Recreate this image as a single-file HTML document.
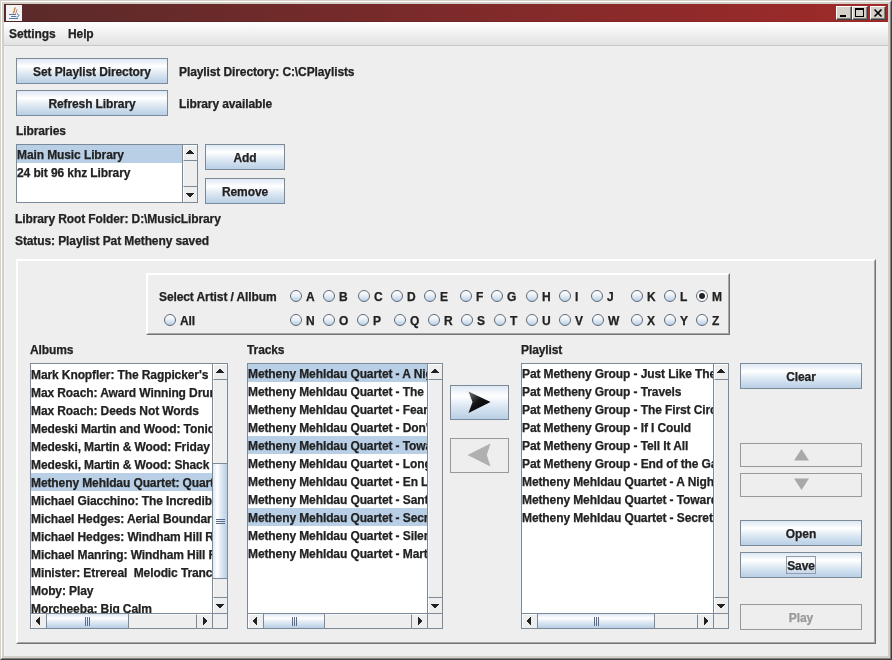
<!DOCTYPE html><html><head><meta charset="utf-8"><style>
*{margin:0;padding:0;box-sizing:border-box}
html,body{width:892px;height:660px;overflow:hidden;background:#d4d0c8}
body{position:relative;font-family:"Liberation Sans",sans-serif;font-weight:bold;font-size:12px;color:#222;letter-spacing:-0.1px;-webkit-text-stroke:0.25px #222}
div{position:absolute}
.t{white-space:nowrap;line-height:15px;padding-top:1px}
.btn{border:1px solid #7a8a99;background:linear-gradient(#dde8f3 0%,#fff 30%,#dde8f3 60%,#b8cfe5 100%);text-align:center;white-space:nowrap;padding-top:1px}
.dis{color:#999;-webkit-text-stroke:0.25px #999;border-color:#999;background:#eee}
.list{border:1px solid #7a8a99;background:#fff;overflow:hidden}
.row{left:0;height:18px;line-height:18px;padding-left:0;padding-top:1px;white-space:nowrap;width:100%}
.sel{background:#b8cfe5}
.rd{width:12px;height:12px;border-radius:50%;border:1px solid #5f6b78;background:linear-gradient(#fff 0%,#f2f6fa 30%,#dde8f3 60%,#b8cfe5 100%)}
.rt{white-space:nowrap;line-height:15px;padding-top:1px}
.wb{width:16px;height:14px;background:#d4d0c8;border-top:1px solid #fff;border-left:1px solid #fff;border-right:1px solid #404040;border-bottom:1px solid #404040}
.wbi{left:0;top:0;width:14px;height:12px;border-right:1px solid #808080;border-bottom:1px solid #808080}
</style></head><body><div style="left:0;top:0;width:892px;height:660px;will-change:transform;overflow:hidden">
<div style="left:0;top:0;width:892px;height:660px;border-top:1px solid #d4d0c8;border-left:1px solid #d4d0c8;border-right:1px solid #404040;border-bottom:1px solid #404040"></div>
<div style="left:1px;top:1px;width:890px;height:658px;border-top:1px solid #fff;border-left:1px solid #fff;border-right:1px solid #808080;border-bottom:1px solid #808080"></div>
<div style="left:4px;top:4px;width:884px;height:18px;background:linear-gradient(to right,#5a2a2a,#a02a2a)"></div>
<div style="left:6px;top:5px;width:16px;height:16px;background:#f2f2f4"></div>
<svg style="position:absolute;left:6px;top:5px" width="16" height="16" viewBox="0 0 16 16"><path d="M9.5 2.5 C7.5 4.5 9.5 6 7 8.5" stroke="#d88a40" stroke-width="1.4" fill="none"/><path d="M11 4.5 C10 6 11 7 9.5 8.5" stroke="#c06a30" stroke-width="1" fill="none"/><path d="M3 9.5 h7 M5 11.5 h5 M3 13.5 h9" stroke="#5577aa" stroke-width="1"/><path d="M11 9 C13.5 9 13.5 12 10.5 12" stroke="#4a6aa8" fill="none" stroke-width="1"/></svg>
<div class="wb" style="left:836px;top:6px"><div class="wbi"></div></div>
<div class="wb" style="left:852px;top:6px"><div class="wbi"></div></div>
<div class="wb" style="left:870px;top:6px"><div class="wbi"></div></div>
<div style="left:840px;top:15px;width:6px;height:2px;background:#000"></div>
<div style="left:855px;top:8px;width:9px;height:9px;border:1px solid #000;border-top-width:2px"></div>
<svg style="position:absolute;left:870px;top:6px" width="16" height="14"><path d="M4.5 3.5 L11.5 10.5 M11.5 3.5 L4.5 10.5" stroke="#000" stroke-width="1.6"/></svg>
<div style="left:4px;top:22px;width:884px;height:634px;background:#eeeeee"></div>
<div style="left:4px;top:46px;width:1px;height:610px;background:#f3f3f1"></div>
<div style="left:4px;top:22px;width:884px;height:24px;background:linear-gradient(#fff,#e2e2e2);border-bottom:1px solid #c8c8c8"></div>
<div style="left:4px;top:21px;width:884px;height:1px;background:linear-gradient(to right,#4a2222,#9a2828)"></div>
<div class="t" style="left:9px;top:26px">Settings</div>
<div class="t" style="left:68px;top:26px">Help</div>
<div class="btn" style="left:16px;top:58px;width:152px;height:26px;line-height:24px">Set Playlist Directory</div>
<div class="btn" style="left:16px;top:90px;width:152px;height:26px;line-height:24px">Refresh Library</div>
<div class="t" style="left:179px;top:64px">Playlist Directory: C:\CPlaylists</div>
<div class="t" style="left:179px;top:96px">Library available</div>
<div class="t" style="left:16px;top:123px">Libraries</div>
<div class="list" style="left:16px;top:144px;width:182px;height:59px"></div>
<div class="row sel" style="left:17px;top:145px;width:165px">Main Music Library</div>
<div class="row" style="left:17px;top:163px;width:165px">24 bit 96 khz Library</div>
<div style="left:182px;top:145px;width:15px;height:57px;background:#eeeeee;border-left:1px solid #7a8a99"></div>
<div style="left:183px;top:145px;width:1px;height:57px;background:#f8f9fc"></div>
<div style="left:183px;top:145px;width:14px;height:16px;background:#eeeeee;border-bottom:1px solid #7a8a99;border-top:1px solid #fff;border-left:1px solid #fff"></div>
<svg style="position:absolute;left:186px;top:150px" width="8" height="4" shape-rendering="crispEdges" fill="#222"><rect x="3" y="0" width="2" height="1"/><rect x="2" y="1" width="4" height="1"/><rect x="1" y="2" width="6" height="1"/><rect x="0" y="3" width="8" height="1"/></svg>
<div style="left:183px;top:186px;width:14px;height:16px;background:#eeeeee;border-top:1px solid #7a8a99;border-left:1px solid #fff"></div>
<svg style="position:absolute;left:186px;top:193px" width="8" height="4" shape-rendering="crispEdges" fill="#222"><rect x="0" y="0" width="8" height="1"/><rect x="1" y="1" width="6" height="1"/><rect x="2" y="2" width="4" height="1"/><rect x="3" y="3" width="2" height="1"/></svg>
<div class="btn" style="left:205px;top:144px;width:80px;height:26px;line-height:24px">Add</div>
<div class="btn" style="left:205px;top:178px;width:80px;height:26px;line-height:24px">Remove</div>
<div class="t" style="left:15px;top:211px">Library Root Folder: D:\MusicLibrary</div>
<div class="t" style="left:15px;top:233px">Status: Playlist Pat Metheny saved</div>
<div style="left:16px;top:259px;width:860px;height:385px;border-top:1px solid #fff;border-left:1px solid #fff;border-right:1px solid #747474;border-bottom:1px solid #747474"></div>
<div style="left:17px;top:260px;width:858px;height:383px;border-top:1px solid #fff;border-left:1px solid #fff;border-right:1px solid #a6a6a6;border-bottom:1px solid #a6a6a6"></div>
<div style="left:146px;top:273px;width:584px;height:62px;border-top:1px solid #fff;border-left:1px solid #fff;border-right:1px solid #747474;border-bottom:1px solid #747474"></div>
<div style="left:147px;top:274px;width:582px;height:60px;border-top:1px solid #fff;border-left:1px solid #fff;border-right:1px solid #a6a6a6;border-bottom:1px solid #a6a6a6"></div>
<div class="t" style="left:159px;top:289px">Select Artist / Allbum</div>
<div class="rd" style="left:290px;top:290px"></div>
<div class="rt" style="left:306px;top:289px">A</div>
<div class="rd" style="left:323px;top:290px"></div>
<div class="rt" style="left:339px;top:289px">B</div>
<div class="rd" style="left:358px;top:290px"></div>
<div class="rt" style="left:374px;top:289px">C</div>
<div class="rd" style="left:391px;top:290px"></div>
<div class="rt" style="left:407px;top:289px">D</div>
<div class="rd" style="left:424px;top:290px"></div>
<div class="rt" style="left:440px;top:289px">E</div>
<div class="rd" style="left:460px;top:290px"></div>
<div class="rt" style="left:476px;top:289px">F</div>
<div class="rd" style="left:491px;top:290px"></div>
<div class="rt" style="left:507px;top:289px">G</div>
<div class="rd" style="left:526px;top:290px"></div>
<div class="rt" style="left:542px;top:289px">H</div>
<div class="rd" style="left:559px;top:290px"></div>
<div class="rt" style="left:575px;top:289px">I</div>
<div class="rd" style="left:591px;top:290px"></div>
<div class="rt" style="left:607px;top:289px">J</div>
<div class="rd" style="left:631px;top:290px"></div>
<div class="rt" style="left:647px;top:289px">K</div>
<div class="rd" style="left:664px;top:290px"></div>
<div class="rt" style="left:680px;top:289px">L</div>
<div class="rd" style="left:696px;top:290px;background:#fbfcfe"></div>
<div style="left:699px;top:293px;width:6px;height:6px;border-radius:50%;background:#222"></div>
<div class="rt" style="left:712px;top:289px">M</div>
<div class="rd" style="left:290px;top:314px"></div>
<div class="rt" style="left:306px;top:313px">N</div>
<div class="rd" style="left:323px;top:314px"></div>
<div class="rt" style="left:339px;top:313px">O</div>
<div class="rd" style="left:357px;top:314px"></div>
<div class="rt" style="left:373px;top:313px">P</div>
<div class="rd" style="left:394px;top:314px"></div>
<div class="rt" style="left:410px;top:313px">Q</div>
<div class="rd" style="left:428px;top:314px"></div>
<div class="rt" style="left:444px;top:313px">R</div>
<div class="rd" style="left:461px;top:314px"></div>
<div class="rt" style="left:477px;top:313px">S</div>
<div class="rd" style="left:494px;top:314px"></div>
<div class="rt" style="left:510px;top:313px">T</div>
<div class="rd" style="left:526px;top:314px"></div>
<div class="rt" style="left:542px;top:313px">U</div>
<div class="rd" style="left:559px;top:314px"></div>
<div class="rt" style="left:575px;top:313px">V</div>
<div class="rd" style="left:592px;top:314px"></div>
<div class="rt" style="left:608px;top:313px">W</div>
<div class="rd" style="left:631px;top:314px"></div>
<div class="rt" style="left:647px;top:313px">X</div>
<div class="rd" style="left:664px;top:314px"></div>
<div class="rt" style="left:680px;top:313px">Y</div>
<div class="rd" style="left:696px;top:314px"></div>
<div class="rt" style="left:712px;top:313px">Z</div>
<div class="rd" style="left:164px;top:314px"></div>
<div class="rt" style="left:180px;top:313px">All</div>
<div class="t" style="left:30px;top:342px">Albums</div>
<div class="t" style="left:247px;top:342px">Tracks</div>
<div class="t" style="left:521px;top:342px">Playlist</div>
<div class="list" style="left:30px;top:363px;width:198px;height:266px"></div>
<div style="left:31px;top:364px;width:181px;height:249px;overflow:hidden">
<div class="row" style="top:1px">Mark Knopfler: The Ragpicker's Dream</div>
<div class="row" style="top:19px">Max Roach: Award Winning Drummer</div>
<div class="row" style="top:37px">Max Roach: Deeds Not Words</div>
<div class="row" style="top:55px">Medeski Martin and Wood: Tonic</div>
<div class="row" style="top:73px">Medeski, Martin &amp; Wood: Friday Afternoon</div>
<div class="row" style="top:91px">Medeski, Martin &amp; Wood: Shack Man</div>
<div class="row sel" style="top:109px">Metheny Mehldau Quartet: Quartet</div>
<div class="row" style="top:127px">Michael Giacchino: The Incredibles</div>
<div class="row" style="top:145px">Michael Hedges: Aerial Boundaries</div>
<div class="row" style="top:163px">Michael Hedges: Windham Hill Retrospective</div>
<div class="row" style="top:181px">Michael Manring: Windham Hill Retrospective</div>
<div class="row" style="top:199px">Minister: Etrereal&nbsp; Melodic Trance</div>
<div class="row" style="top:217px">Moby: Play</div>
<div class="row" style="top:235px">Morcheeba: Big Calm</div>
</div>
<div style="left:212px;top:364px;width:15px;height:249px;background:#eeeeee;border-left:1px solid #7a8a99"></div>
<div style="left:213px;top:364px;width:1px;height:249px;background:#f8f9fc"></div>
<div style="left:213px;top:364px;width:14px;height:16px;background:#eeeeee;border-bottom:1px solid #7a8a99;border-top:1px solid #fff;border-left:1px solid #fff"></div>
<svg style="position:absolute;left:216px;top:369px" width="8" height="4" shape-rendering="crispEdges" fill="#222"><rect x="3" y="0" width="2" height="1"/><rect x="2" y="1" width="4" height="1"/><rect x="1" y="2" width="6" height="1"/><rect x="0" y="3" width="8" height="1"/></svg>
<div style="left:213px;top:597px;width:14px;height:16px;background:#eeeeee;border-top:1px solid #7a8a99;border-left:1px solid #fff"></div>
<svg style="position:absolute;left:216px;top:604px" width="8" height="4" shape-rendering="crispEdges" fill="#222"><rect x="0" y="0" width="8" height="1"/><rect x="1" y="1" width="6" height="1"/><rect x="2" y="2" width="4" height="1"/><rect x="3" y="3" width="2" height="1"/></svg>
<div style="left:213px;top:463px;width:14px;height:116px;border-top:1px solid #7a8a99;border-bottom:1px solid #7a8a99;background:linear-gradient(to right,#dde8f3 0%,#fff 30%,#dde8f3 60%,#b8cfe5 100%)"></div>
<div style="left:216px;top:519px;width:9px;height:5px;border-top:1px solid #5a6b8c;border-bottom:1px solid #5a6b8c"></div>
<div style="left:216px;top:521px;width:9px;height:1px;background:#5a6b8c"></div>
<div style="left:31px;top:613px;width:181px;height:15px;background:#eeeeee;border-top:1px solid #7a8a99"></div>
<div style="left:31px;top:614px;width:181px;height:1px;background:#f8f9fc"></div>
<div style="left:31px;top:614px;width:16px;height:14px;background:#eeeeee;border-right:1px solid #7a8a99;border-top:1px solid #fff;border-left:1px solid #fff"></div>
<svg style="position:absolute;left:36px;top:617px" width="4" height="8" shape-rendering="crispEdges" fill="#222"><rect x="0" y="3" width="1" height="2"/><rect x="1" y="2" width="1" height="4"/><rect x="2" y="1" width="1" height="6"/><rect x="3" y="0" width="1" height="8"/></svg>
<div style="left:196px;top:614px;width:16px;height:14px;background:#eeeeee;border-left:1px solid #7a8a99;border-top:1px solid #fff"></div>
<svg style="position:absolute;left:203px;top:617px" width="4" height="8" shape-rendering="crispEdges" fill="#222"><rect x="0" y="0" width="1" height="8"/><rect x="1" y="1" width="1" height="6"/><rect x="2" y="2" width="1" height="4"/><rect x="3" y="3" width="1" height="2"/></svg>
<div style="left:46px;top:614px;width:83px;height:14px;border-left:1px solid #7a8a99;border-right:1px solid #7a8a99;background:linear-gradient(#dde8f3 0%,#fff 30%,#dde8f3 60%,#b8cfe5 100%)"></div>
<div style="left:85px;top:617px;width:5px;height:9px;border-left:1px solid #5a6b8c;border-right:1px solid #5a6b8c"></div>
<div style="left:87px;top:617px;width:1px;height:9px;background:#5a6b8c"></div>
<div style="left:212px;top:613px;width:15px;height:15px;background:#eeeeee;border-left:1px solid #7a8a99;border-top:1px solid #7a8a99"></div>
<div class="list" style="left:247px;top:363px;width:196px;height:266px"></div>
<div style="left:248px;top:364px;width:179px;height:249px;overflow:hidden">
<div class="row sel" style="top:0px">Metheny Mehldau Quartet - A Night Away</div>
<div class="row" style="top:18px">Metheny Mehldau Quartet - The Sound of Water</div>
<div class="row" style="top:36px">Metheny Mehldau Quartet - Fear and Trembling</div>
<div class="row" style="top:54px">Metheny Mehldau Quartet - Don't Wait</div>
<div class="row sel" style="top:72px">Metheny Mehldau Quartet - Towards the Light</div>
<div class="row" style="top:90px">Metheny Mehldau Quartet - Long Before</div>
<div class="row" style="top:108px">Metheny Mehldau Quartet - En La Tierra</div>
<div class="row" style="top:126px">Metheny Mehldau Quartet - Santa Cruz</div>
<div class="row sel" style="top:144px">Metheny Mehldau Quartet - Secret Beach</div>
<div class="row" style="top:162px">Metheny Mehldau Quartet - Silent Movie</div>
<div class="row" style="top:180px">Metheny Mehldau Quartet - Marta's Theme</div>
</div>
<div style="left:427px;top:364px;width:15px;height:249px;background:#eeeeee;border-left:1px solid #7a8a99"></div>
<div style="left:428px;top:364px;width:1px;height:249px;background:#f8f9fc"></div>
<div style="left:428px;top:364px;width:14px;height:16px;background:#eeeeee;border-bottom:1px solid #7a8a99;border-top:1px solid #fff;border-left:1px solid #fff"></div>
<svg style="position:absolute;left:431px;top:369px" width="8" height="4" shape-rendering="crispEdges" fill="#222"><rect x="3" y="0" width="2" height="1"/><rect x="2" y="1" width="4" height="1"/><rect x="1" y="2" width="6" height="1"/><rect x="0" y="3" width="8" height="1"/></svg>
<div style="left:428px;top:597px;width:14px;height:16px;background:#eeeeee;border-top:1px solid #7a8a99;border-left:1px solid #fff"></div>
<svg style="position:absolute;left:431px;top:604px" width="8" height="4" shape-rendering="crispEdges" fill="#222"><rect x="0" y="0" width="8" height="1"/><rect x="1" y="1" width="6" height="1"/><rect x="2" y="2" width="4" height="1"/><rect x="3" y="3" width="2" height="1"/></svg>
<div style="left:248px;top:613px;width:179px;height:15px;background:#eeeeee;border-top:1px solid #7a8a99"></div>
<div style="left:248px;top:614px;width:179px;height:1px;background:#f8f9fc"></div>
<div style="left:248px;top:614px;width:16px;height:14px;background:#eeeeee;border-right:1px solid #7a8a99;border-top:1px solid #fff;border-left:1px solid #fff"></div>
<svg style="position:absolute;left:253px;top:617px" width="4" height="8" shape-rendering="crispEdges" fill="#222"><rect x="0" y="3" width="1" height="2"/><rect x="1" y="2" width="1" height="4"/><rect x="2" y="1" width="1" height="6"/><rect x="3" y="0" width="1" height="8"/></svg>
<div style="left:411px;top:614px;width:16px;height:14px;background:#eeeeee;border-left:1px solid #7a8a99;border-top:1px solid #fff"></div>
<svg style="position:absolute;left:418px;top:617px" width="4" height="8" shape-rendering="crispEdges" fill="#222"><rect x="0" y="0" width="1" height="8"/><rect x="1" y="1" width="1" height="6"/><rect x="2" y="2" width="1" height="4"/><rect x="3" y="3" width="1" height="2"/></svg>
<div style="left:263px;top:614px;width:62px;height:14px;border-left:1px solid #7a8a99;border-right:1px solid #7a8a99;background:linear-gradient(#dde8f3 0%,#fff 30%,#dde8f3 60%,#b8cfe5 100%)"></div>
<div style="left:292px;top:617px;width:5px;height:9px;border-left:1px solid #5a6b8c;border-right:1px solid #5a6b8c"></div>
<div style="left:294px;top:617px;width:1px;height:9px;background:#5a6b8c"></div>
<div style="left:427px;top:613px;width:15px;height:15px;background:#eeeeee;border-left:1px solid #7a8a99;border-top:1px solid #7a8a99"></div>
<div class="list" style="left:521px;top:363px;width:208px;height:266px"></div>
<div style="left:522px;top:364px;width:191px;height:249px;overflow:hidden">
<div class="row" style="top:0px">Pat Metheny Group - Just Like The Day</div>
<div class="row" style="top:18px">Pat Metheny Group - Travels</div>
<div class="row" style="top:36px">Pat Metheny Group - The First Circle</div>
<div class="row" style="top:54px">Pat Metheny Group - If I Could</div>
<div class="row" style="top:72px">Pat Metheny Group - Tell It All</div>
<div class="row" style="top:90px">Pat Metheny Group - End of the Game</div>
<div class="row" style="top:108px">Metheny Mehldau Quartet - A Night Away</div>
<div class="row" style="top:126px">Metheny Mehldau Quartet - Towards the Light</div>
<div class="row" style="top:144px">Metheny Mehldau Quartet - Secret Beach</div>
</div>
<div style="left:713px;top:364px;width:15px;height:249px;background:#eeeeee;border-left:1px solid #7a8a99"></div>
<div style="left:714px;top:364px;width:1px;height:249px;background:#f8f9fc"></div>
<div style="left:714px;top:364px;width:14px;height:16px;background:#eeeeee;border-bottom:1px solid #7a8a99;border-top:1px solid #fff;border-left:1px solid #fff"></div>
<svg style="position:absolute;left:717px;top:369px" width="8" height="4" shape-rendering="crispEdges" fill="#222"><rect x="3" y="0" width="2" height="1"/><rect x="2" y="1" width="4" height="1"/><rect x="1" y="2" width="6" height="1"/><rect x="0" y="3" width="8" height="1"/></svg>
<div style="left:714px;top:597px;width:14px;height:16px;background:#eeeeee;border-top:1px solid #7a8a99;border-left:1px solid #fff"></div>
<svg style="position:absolute;left:717px;top:604px" width="8" height="4" shape-rendering="crispEdges" fill="#222"><rect x="0" y="0" width="8" height="1"/><rect x="1" y="1" width="6" height="1"/><rect x="2" y="2" width="4" height="1"/><rect x="3" y="3" width="2" height="1"/></svg>
<div style="left:522px;top:613px;width:191px;height:15px;background:#eeeeee;border-top:1px solid #7a8a99"></div>
<div style="left:522px;top:614px;width:191px;height:1px;background:#f8f9fc"></div>
<div style="left:522px;top:614px;width:16px;height:14px;background:#eeeeee;border-right:1px solid #7a8a99;border-top:1px solid #fff;border-left:1px solid #fff"></div>
<svg style="position:absolute;left:527px;top:617px" width="4" height="8" shape-rendering="crispEdges" fill="#222"><rect x="0" y="3" width="1" height="2"/><rect x="1" y="2" width="1" height="4"/><rect x="2" y="1" width="1" height="6"/><rect x="3" y="0" width="1" height="8"/></svg>
<div style="left:697px;top:614px;width:16px;height:14px;background:#eeeeee;border-left:1px solid #7a8a99;border-top:1px solid #fff"></div>
<svg style="position:absolute;left:704px;top:617px" width="4" height="8" shape-rendering="crispEdges" fill="#222"><rect x="0" y="0" width="1" height="8"/><rect x="1" y="1" width="1" height="6"/><rect x="2" y="2" width="1" height="4"/><rect x="3" y="3" width="1" height="2"/></svg>
<div style="left:537px;top:614px;width:118px;height:14px;border-left:1px solid #7a8a99;border-right:1px solid #7a8a99;background:linear-gradient(#dde8f3 0%,#fff 30%,#dde8f3 60%,#b8cfe5 100%)"></div>
<div style="left:594px;top:617px;width:5px;height:9px;border-left:1px solid #5a6b8c;border-right:1px solid #5a6b8c"></div>
<div style="left:596px;top:617px;width:1px;height:9px;background:#5a6b8c"></div>
<div style="left:713px;top:613px;width:15px;height:15px;background:#eeeeee;border-left:1px solid #7a8a99;border-top:1px solid #7a8a99"></div>
<div class="btn" style="left:450px;top:385px;width:59px;height:35px;line-height:33px"></div>
<svg style="position:absolute;left:450px;top:385px" width="59" height="35"><defs><linearGradient id="ag" x1="0" y1="0" x2="1" y2="1"><stop offset="0" stop-color="#777"/><stop offset="0.45" stop-color="#111"/><stop offset="1" stop-color="#000"/></linearGradient></defs><path d="M18.5 6.5 L40.5 17 L18.5 28 L22.5 17Z" fill="url(#ag)"/></svg>
<div style="left:450px;top:438px;width:59px;height:35px;border:1px solid #999"></div>
<svg style="position:absolute;left:450px;top:438px" width="59" height="35"><path d="M40.5 5.5 L17.5 17 L40.5 28.5 L36.8 17Z" fill="#b0b0b0"/></svg>
<div class="btn" style="left:740px;top:363px;width:122px;height:26px;line-height:24px">Clear</div>
<div style="left:740px;top:443px;width:122px;height:24px;border:1px solid #999"></div>
<svg style="position:absolute;left:740px;top:443px" width="122" height="24"><path d="M61.5 6 L69 17.5 L54 17.5Z" fill="#a8a8a8"/></svg>
<div style="left:740px;top:473px;width:122px;height:24px;border:1px solid #999"></div>
<svg style="position:absolute;left:740px;top:473px" width="122" height="24"><path d="M54 5.5 L69 5.5 L61.5 17Z" fill="#a8a8a8"/></svg>
<div class="btn" style="left:740px;top:520px;width:122px;height:26px;line-height:24px">Open</div>
<div class="btn" style="left:740px;top:552px;width:122px;height:26px;line-height:24px">Save</div>
<div style="left:786px;top:556px;width:30px;height:18px;border:1px solid #8e9cab"></div>
<div class="btn dis" style="left:740px;top:604px;width:122px;height:26px;line-height:24px">Play</div>
</div></body></html>
